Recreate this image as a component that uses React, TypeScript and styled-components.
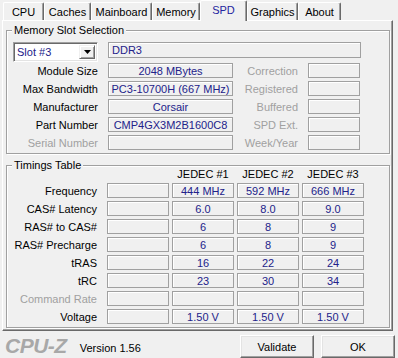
import React from "react";
import styled, { createGlobalStyle } from "styled-components";

const GlobalStyle = createGlobalStyle`
  html, body { margin: 0; padding: 0; background: #f0f0f0; }
  * { box-sizing: border-box; }
`;

const Window = styled.div`
  width: 398px;
  height: 358px;
  overflow: hidden;
  background: #f0f0f0;
  font-family: "Liberation Sans", Arial, sans-serif;
  font-size: 11px;
  color: #000;
  display: flex;
  flex-direction: column;
`;

const TabBar = styled.div`
  height: 20px;
  display: flex;
  align-items: flex-end;
  padding-left: 3px;
`;

const Tab = styled.div<{ $w: number; $active?: boolean }>`
  position: relative;
  z-index: ${(p) => (p.$active ? 2 : 1)};
  width: ${(p) => p.$w}px;
  height: ${(p) => (p.$active ? 21 : 18)}px;
  margin-bottom: ${(p) => (p.$active ? -1 : 0)}px;
  display: flex;
  align-items: center;
  justify-content: center;
  padding-bottom: ${(p) => (p.$active ? 2 : 0)}px;
  background: #f0f0f0;
  border-top: 1px solid #fff;
  border-left: 1px solid #fff;
  border-right: 1px solid #696969;
  border-radius: 2px 2px 0 0;
  box-shadow: inset -1px 0 0 #a0a0a0;
  color: ${(p) => (p.$active ? "#2424a0" : "#000")};
`;

const Panel = styled.div`
  margin-left: 2px;
  width: 391px;
  height: 313px;
  border-top: 1px solid #fff;
  border-left: 1px solid #fff;
  border-right: 1px solid #696969;
  border-bottom: 1px solid #696969;
  box-shadow: inset -1px -1px 0 #a0a0a0;
  padding: 3px 3px 0 3px;
  display: flex;
  flex-direction: column;
  gap: 5px;
`;

const Group = styled.fieldset`
  margin: 0;
  width: 384px;
  min-width: 0;
  padding: 0 0 3px 0;
  border: 1px solid #a0a0a0;
  box-shadow: inset 1px 1px 0 #fff, 1px 1px 0 #fff;
`;

const Legend = styled.legend`
  margin-left: 5px;
  padding: 0 2px;
  line-height: 13px;
  background: #f0f0f0;
`;

const TopRow = styled.div`
  display: flex;
  align-items: flex-start;
  height: 20px;
  margin-top: 5px;
  margin-bottom: 1px;
`;

const Combo = styled.div`
  margin-left: 6px;
  width: 85px;
  height: 20px;
  background: #fff;
  border: 1px solid;
  border-color: #a0a0a0 #fff #fff #a0a0a0;
  box-shadow: inset 1px 1px 0 #696969, inset -1px -1px 0 #e3e3e3;
  display: flex;
  align-items: stretch;
  padding: 2px;
`;

const ComboText = styled.div`
  flex: 1;
  display: flex;
  align-items: center;
  padding-left: 1px;
  color: #22228a;
`;

const ComboButton = styled.div`
  width: 16px;
  background: #f0f0f0;
  border: 1px solid;
  border-color: #f0f0f0 #696969 #696969 #f0f0f0;
  box-shadow: inset 1px 1px 0 #fff, inset -1px -1px 0 #a0a0a0;
  display: flex;
  align-items: center;
  justify-content: center;
`;

const SlotGrid = styled.div`
  display: grid;
  grid-template-columns: 98px 125px 69px 52px;
  grid-auto-rows: 15px;
  column-gap: 3px;
  row-gap: 3px;
`;

const TimingGrid = styled.div`
  margin-top: -4px;
  display: grid;
  grid-template-columns: 97px repeat(4, 62px);
  grid-template-rows: 12px;
  grid-auto-rows: 15px;
  column-gap: 3px;
  row-gap: 3px;
`;

const HeaderCell = styled.div`
  display: flex;
  align-items: center;
  justify-content: center;
  white-space: nowrap;
  line-height: 12px;
`;

const Label = styled.div<{ $disabled?: boolean }>`
  display: flex;
  align-items: center;
  justify-content: flex-end;
  padding-right: 7px;
  white-space: nowrap;
  color: ${(p) => (p.$disabled ? "#a0a0a0" : "#000")};
`;

const Field = styled.div<{ $left?: boolean; $w?: number; $ml?: number; $h?: number }>`
  ${(p) => (p.$w ? `width: ${p.$w}px;` : "")}
  ${(p) => (p.$ml ? `margin-left: ${p.$ml}px;` : "")}
  height: ${(p) => p.$h ?? 15}px;
  border: 1px solid #a0a0a0;
  box-shadow: inset 1px 1px 0 #fff;
  display: flex;
  align-items: center;
  justify-content: ${(p) => (p.$left ? "flex-start" : "center")};
  padding: 0 3px;
  color: #22228a;
  white-space: nowrap;
  overflow: hidden;
`;

const Footer = styled.div`
  flex: 1;
  display: flex;
  align-items: flex-start;
  padding-top: 4px;
`;

const Logo = styled.div`
  margin-left: 5px;
  font-size: 21px;
  font-weight: bold;
  font-style: italic;
  color: #a8a8a8;
  line-height: 21px;
  letter-spacing: -0.5px;
`;

const Version = styled.div`
  margin-left: 13px;
  margin-top: 7px;
  line-height: 13px;
`;

const Buttons = styled.div`
  margin-left: auto;
  margin-right: 3px;
  display: flex;
  gap: 7px;
`;

const Button = styled.div`
  width: 74px;
  height: 23px;
  background: #f0f0f0;
  border: 1px solid;
  border-color: #fff #696969 #696969 #fff;
  box-shadow: inset -1px -1px 0 #a0a0a0, inset 1px 1px 0 #e3e3e3;
  display: flex;
  align-items: center;
  justify-content: center;
`;

const tabs = [
  { name: "CPU", w: 41 },
  { name: "Caches", w: 47 },
  { name: "Mainboard", w: 61 },
  { name: "Memory", w: 48 },
  { name: "SPD", w: 47, active: true },
  { name: "Graphics", w: 51 },
  { name: "About", w: 43 },
];

const slotRows = [
  { l: "Module Size", v: "2048 MBytes", r: "Correction" },
  { l: "Max Bandwidth", v: "PC3-10700H (667 MHz)", r: "Registered" },
  { l: "Manufacturer", v: "Corsair", r: "Buffered" },
  { l: "Part Number", v: "CMP4GX3M2B1600C8", r: "SPD Ext." },
  { l: "Serial Number", v: "", r: "Week/Year", disabled: true },
];

const timingRows = [
  { l: "Frequency", v: ["444 MHz", "592 MHz", "666 MHz"] },
  { l: "CAS# Latency", v: ["6.0", "8.0", "9.0"] },
  { l: "RAS# to CAS#", v: ["6", "8", "9"] },
  { l: "RAS# Precharge", v: ["6", "8", "9"] },
  { l: "tRAS", v: ["16", "22", "24"] },
  { l: "tRC", v: ["23", "30", "34"] },
  { l: "Command Rate", v: ["", "", ""], disabled: true },
  { l: "Voltage", v: ["1.50 V", "1.50 V", "1.50 V"] },
];

export default function App() {
  return (
    <>
      <GlobalStyle />
      <Window>
        <TabBar>
          {tabs.map((t) => (
            <Tab key={t.name} $w={t.w} $active={t.active}>
              {t.name}
            </Tab>
          ))}
        </TabBar>
        <Panel>
          <Group>
            <Legend>Memory Slot Selection</Legend>
            <TopRow>
              <Combo>
                <ComboText>Slot #3</ComboText>
                <ComboButton>
                  <svg width="7" height="4" viewBox="0 0 7 4">
                    <path d="M0 0h7L3.5 4z" fill="#000" />
                  </svg>
                </ComboButton>
              </Combo>
              <Field $left $w={253} $ml={10} $h={16}>
                DDR3
              </Field>
            </TopRow>
            <SlotGrid>
              {slotRows.map((r) => (
                <React.Fragment key={r.l}>
                  <Label $disabled={r.disabled}>{r.l}</Label>
                  <Field>{r.v}</Field>
                  <Label $disabled>{r.r}</Label>
                  <Field />
                </React.Fragment>
              ))}
            </SlotGrid>
          </Group>
          <Group>
            <Legend>Timings Table</Legend>
            <TimingGrid>
              <div />
              <div />
              <HeaderCell>JEDEC #1</HeaderCell>
              <HeaderCell>JEDEC #2</HeaderCell>
              <HeaderCell>JEDEC #3</HeaderCell>
              {timingRows.map((r) => (
                <React.Fragment key={r.l}>
                  <Label $disabled={r.disabled}>{r.l}</Label>
                  <Field />
                  {r.v.map((v, i) => (
                    <Field key={i}>{v}</Field>
                  ))}
                </React.Fragment>
              ))}
            </TimingGrid>
          </Group>
        </Panel>
        <Footer>
          <Logo>CPU-Z</Logo>
          <Version>Version 1.56</Version>
          <Buttons>
            <Button>Validate</Button>
            <Button>OK</Button>
          </Buttons>
        </Footer>
      </Window>
    </>
  );
}
